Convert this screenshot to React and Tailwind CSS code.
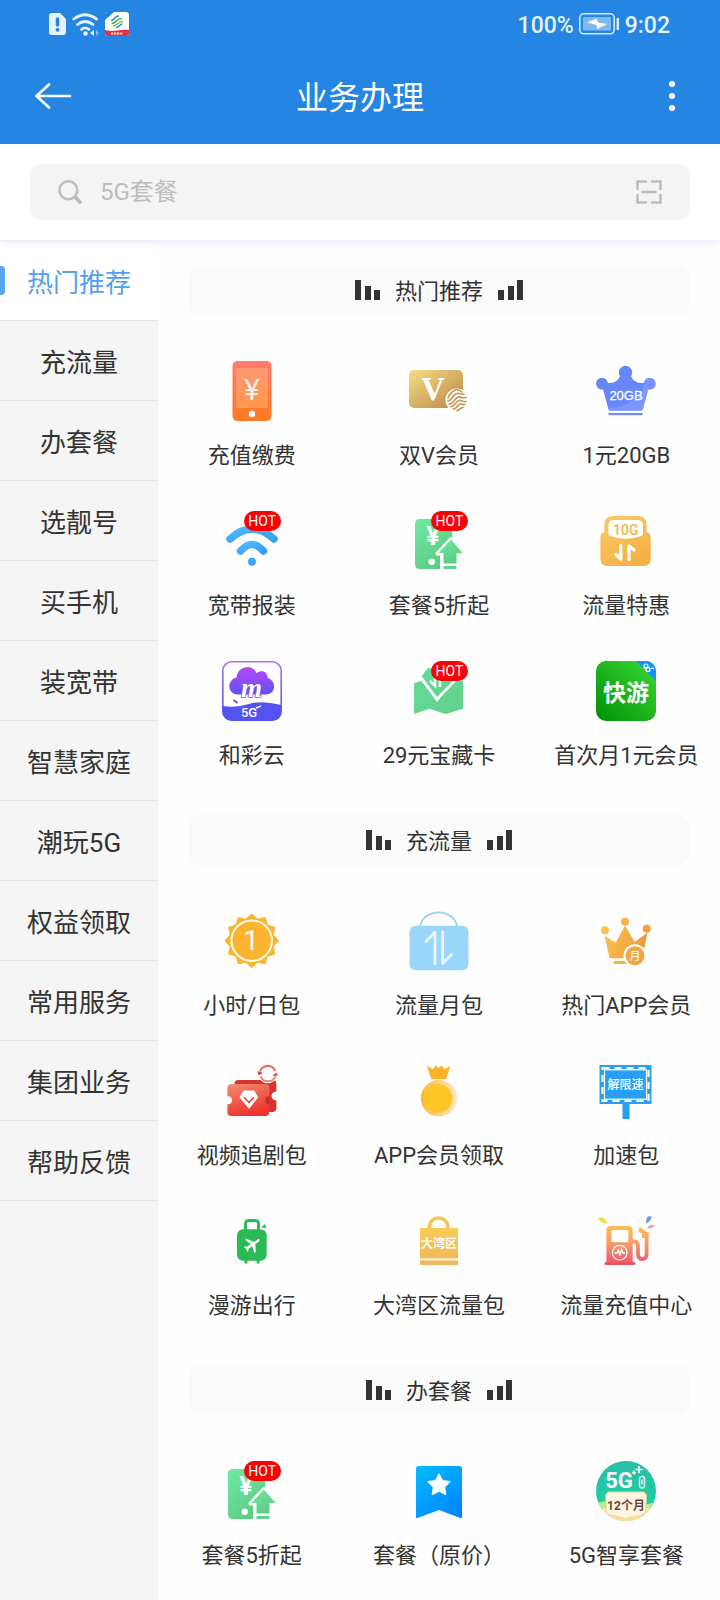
import React, { useState } from "react";

const categories = [
  "热门推荐",
  "充流量",
  "办套餐",
  "选靓号",
  "买手机",
  "装宽带",
  "智慧家庭",
  "潮玩5G",
  "权益领取",
  "常用服务",
  "集团业务",
  "帮助反馈",
];

// Linear gradient from one corner of the shape to another
const Grad = ({ id, from, to, x2 = 0, y2 = 1, x1 = 0, y1 = 0 }) => (
  <linearGradient id={id} x1={x1} y1={y1} x2={x2} y2={y2}>
    <stop offset="0" stopColor={from} />
    <stop offset="1" stopColor={to} />
  </linearGradient>
);

const Icon = ({ children }) => (
  <svg viewBox="0 0 60 60" className="block h-[60px] w-[60px]" aria-hidden="true">
    {children}
  </svg>
);

const SANS = "Roboto, 'Noto Sans CJK SC', sans-serif";

const RechargeIcon = () => (
  <Icon>
    <Grad id="recharge" from="#ff7b71" to="#ff7a20" />
    <rect x="10.5" width="39" height="60" rx="5" fill="url(#recharge)" />
    <rect x="14" y="7" width="32" height="40" rx="1" fill="#ffd080" opacity="0.35" />
    <text x="30" y="39" fontSize="30" fill="#f4efee" textAnchor="middle" fontFamily={SANS}>
      ¥
    </text>
    <circle cx="30" cy="53" r="3.2" fill="#fff" />
  </Icon>
);

const VipCardIcon = () => (
  <Icon>
    <Grad id="vip" from="#f6dc86" to="#b98746" x2={1} />
    <rect y="9" width="54" height="38" rx="5" fill="url(#vip)" />
    <text x="24" y="39" fontSize="33" fontWeight="700" fill="#fff" textAnchor="middle" fontFamily="'Liberation Serif', serif">
      V
    </text>
    <circle cx="48" cy="39" r="11.5" fill="#fff" />
    <g fill="none" stroke="#c79a58" strokeWidth="1.7" strokeLinecap="round">
      <path d="M39 37c1-4 6-8 9-8.500c3 .5 4 1.500 5 2.500" />
      <path d="M39 40c4 0 5-7 9-7.500c3-.3 4 1 7 0.500" />
      <path d="M40 43c5 0 6-6.500 9-7c3-.3 4 1.500 8 0.500" />
      <path d="M41.500 45.500c5 0 5-5.500 8.500-6c3-.3 3.500 1.500 7 1" />
      <path d="M44 48c4 .5 4-4.500 7-4.800c2-.2 3 .8 5 .3" />
      <path d="M48 49.500c3-.5 3-3 6.500-3" />
    </g>
  </Icon>
);

const Crown20Icon = () => (
  <Icon>
    <clipPath id="crown20">
      <path d="M6.700 27 12.300 48q.5 1.700 2 1.700h30.600q1.500 0 2-1.700L52.700 27 48 22Q38 23 35 15h-11Q21 23 11.400 22z" />
    </clipPath>
    <g fill="#6886fb">
      <circle cx="29.500" cy="11.500" r="6.700" />
      <circle cx="6" cy="22.700" r="6" />
      <circle cx="53.800" cy="22.700" r="6" fill="#7890fc" />
    </g>
    <g clipPath="url(#crown20)">
      <rect width="60" height="60" fill="#6886fb" />
      <path d="M12 47Q44 46 51 16L60 20V60H10z" fill="#8ea4fd" opacity="0.55" />
    </g>
    <rect x="12.500" y="52" width="34" height="2.200" fill="#7188f5" />
    <text x="30" y="38.500" fontSize="13" fill="#fff" stroke="#fff" strokeWidth="0.300" textAnchor="middle" fontFamily="'Liberation Sans', sans-serif">
      20GB
    </text>
  </Icon>
);

const WifiIcon = () => (
  <Icon>
    <Grad id="wifi" from="#50b7fd" to="#399eef" x2={1} />
    <g fill="none" stroke="url(#wifi)" strokeWidth="7.500" strokeLinecap="round">
      <path d="M8 28Q30 8 52 28" />
      <path d="M18.500 40Q30 27 41.500 40" />
    </g>
    <circle cx="30" cy="50.700" r="4" fill="#3fa6f4" />
  </Icon>
);

const HalfPriceIcon = () => (
  <Icon>
    <Grad id="half" from="#6eeaa5" to="#5ecb82" x2={0.6} />
    <path d="M11 8H43.300V30L31 44V58H11q-5 0-5-5V13q0-5 5-5z" fill="url(#half)" />
    <text x="24" y="34" fontSize="25" fontWeight="700" fill="#fff" textAnchor="middle" fontFamily={SANS}>
      ¥
    </text>
    <circle cx="22.700" cy="50.700" r="3.200" fill="#fff" />
    <path d="M42 28 28.500 42.500H34V60H48V42.500H54z" fill="#fff" stroke="#fff" strokeWidth="4" strokeLinejoin="round" />
    <path d="M42 28.500 29.500 42H34.500V52.500H47.500V42H53.500z" fill="url(#half)" />
    <rect x="34.500" y="55" width="13" height="3" fill="#62d189" />
  </Icon>
);

const Data10Icon = () => (
  <Icon>
    <Grad id="data10" from="#f8cb6a" to="#f6b045" x2={0.6} />
    <path
      d="M17 5h25q8.500 0 8.500 8.500V21q4.200 1 4.200 5v22q0 7-7 7H11.400q-7 0-7-7V26q0-4 4-5v-7.500Q8.400 5 17 5z"
      fill="url(#data10)"
    />
    <path d="M18 9h23.500q5.500 0 5.500 5.500V24Q30 31.500 12.400 24v-9.500Q12.400 9 18 9z" fill="#fff" />
    <text x="29.700" y="24.200" fontSize="14" fontWeight="500" fill="#f5b54b" textAnchor="middle" fontFamily={SANS}>
      10G
    </text>
    <g fill="none" stroke="#fff" strokeWidth="3.300" strokeLinecap="round" strokeLinejoin="round">
      <path d="M24.800 34.500V48L20 43.500" />
      <path d="M33 48.500V35L38 39" />
    </g>
  </Icon>
);

const CloudIcon = () => (
  <Icon>
    <Grad id="cloudEdge" from="#a573ea" to="#4d51ee" />
    <Grad id="cloud" from="#b54af4" to="#6250f7" />
    <rect x="0.800" y="0.800" width="58.400" height="58.400" rx="9" fill="#fff" stroke="url(#cloudEdge)" strokeWidth="1.600" />
    <path
      d="M16 33.500C5 33.500 4.500 19 14.500 16.500C16 4 31 3 34.500 12C41 8 46 12 45.500 17C54.500 19 54.500 33.500 44 33.500z"
      fill="url(#cloud)"
    />
    <text
      x="29.500"
      y="35.500"
      fontSize="27"
      fontWeight="700"
      fontStyle="italic"
      fill="#fff"
      stroke="#7a4ff6"
      strokeWidth="1.500"
      paintOrder="stroke"
      textAnchor="middle"
      fontFamily="'Liberation Serif', serif"
    >
      m
    </text>
    <path d="M1 45Q14 47 27 43T59 44V50q0 9.500-9 9.500H10q-9 0-9-9.500z" fill="#5452f1" />
    <path d="M11.500 39l4 3" stroke="#6550f5" strokeWidth="2" />
    <text x="27" y="55.500" fontSize="13" fontWeight="500" fill="#fff" textAnchor="middle" fontFamily={SANS}>
      5G
    </text>
    <path d="M34 47l5-2" stroke="#fff" strokeWidth="1.500" />
  </Icon>
);

const TreasureIcon = () => (
  <Icon>
    <Grad id="treasure" from="#62dc96" to="#64cf8d" x2={1} />
    <path d="M5 22 12.500 20 28 41 45 19.700H54V47.700L36.700 53 20.300 47.700 5 53z" fill="url(#treasure)" />
    <path d="M12.500 15.500 18.700 7.300H42L46 18 28 38z" fill="url(#treasure)" />
    <path d="M12 16.500 28 38 46 19.500" fill="none" stroke="#fff" strokeWidth="2.600" strokeLinejoin="round" />
    <path d="M21 20l5 4.500V13M31 13v13" fill="none" stroke="#fff" strokeWidth="2.600" />
  </Icon>
);

const GameIcon = () => (
  <Icon>
    <Grad id="game" from="#39da37" to="#028f04" x1={1} x2={0} />
    <clipPath id="gameClip">
      <rect width="60" height="60" rx="10" />
    </clipPath>
    <g clipPath="url(#gameClip)">
      <rect width="60" height="60" fill="url(#game)" />
      <path d="M40 0H60V20z" fill="#1791f5" />
    </g>
    <g fill="none" stroke="#fff" strokeWidth="1.200">
      <circle cx="50" cy="5" r="2" />
      <circle cx="52" cy="8.500" r="2" />
      <path d="M47.500 7h5M55 7.500q1.500-1 3 .5" />
    </g>
    <text x="30" y="40" fontSize="23" fontWeight="700" fill="#fff" textAnchor="middle" fontFamily="'Noto Sans CJK SC', sans-serif">
      快游
    </text>
    <path d="M8 33 28 29" stroke="#1cb51c" strokeWidth="0.800" />
  </Icon>
);

// 12-pointed sun outline
const sunPoints = Array.from({ length: 24 }, (_, i) => {
  const r = i % 2 === 0 ? 27.3 : 22.8;
  const a = (i * Math.PI) / 12;
  return `${(29.7 + r * Math.sin(a)).toFixed(2)},${(29.7 - r * Math.cos(a)).toFixed(2)}`;
}).join(" ");

const HourIcon = () => (
  <Icon>
    <polygon points={sunPoints} fill="#fbb42f" />
    <circle cx="29.700" cy="29.700" r="20.200" fill="none" stroke="#fffbe8" strokeWidth="2" />
    <text x="29" y="39" fontSize="27" fill="#fff" textAnchor="middle" fontFamily={SANS}>
      1
    </text>
  </Icon>
);

const MonthBagIcon = () => (
  <Icon>
    <path d="M11 16C14-3.500 45-3.500 48.300 16" fill="none" stroke="#a4d3ee" strokeWidth="2" />
    <rect x="0.500" y="14.700" width="59" height="44.500" rx="6" fill="#9ad5fa" />
    <g fill="none" stroke="#e9f6fe" strokeWidth="2.800" strokeLinecap="round" strokeLinejoin="round">
      <path d="M17 30.500 26 21V52.500" />
      <path d="M33.700 21V52.500L42.500 43.500" />
    </g>
  </Icon>
);

const AppCrownIcon = () => (
  <Icon>
    <Grad id="appCrown" from="#fcc455" to="#ee9c3c" x2={1} y2={0.3} />
    <circle cx="9" cy="19.300" r="4" fill="#fac150" />
    <circle cx="29" cy="10.700" r="4" fill="#f6b34a" />
    <circle cx="50.700" cy="17.700" r="4" fill="#efa143" />
    <path d="M8.500 24.500 19.700 31.700 29 14.500 38.700 31 51.500 21.500 46.500 47.300H15q-1.500 0-1.800-1.500z" fill="url(#appCrown)" />
    <path d="M19 50H40V53H19q-1.500 0-1.500-1.500T19 50z" fill="#f6b34a" />
    <circle cx="39" cy="44.700" r="11.500" fill="#fff" />
    <circle cx="39" cy="44.700" r="9.500" fill="#f2a545" />
    <text x="39" y="49" fontSize="11" fontWeight="500" fill="#fff" textAnchor="middle" fontFamily={SANS}>
      月
    </text>
  </Icon>
);

const TicketIcon = () => (
  <Icon>
    <Grad id="ticket" from="#ef8f70" to="#ef342f" x2={0.4} />
    <rect x="12.400" y="19" width="42" height="32" rx="4" fill="#d4362f" />
    <circle cx="53.700" cy="35" r="4.200" fill="#fff" />
    <rect x="5.400" y="23" width="42" height="32" rx="4" fill="url(#ticket)" />
    <circle cx="6" cy="39.300" r="4" fill="#fff" />
    <path d="M47.400 35.300a4 4 0 0 0 0 8z" fill="#c42c29" />
    <path d="M21.700 30H32L35.700 36.300 27 47.300 18 36.300z" fill="#fff" stroke="#fff" strokeLinejoin="round" />
    <path d="M22 36.500 27 41.300 32 36.500" fill="none" stroke="#dd4a3f" strokeWidth="1.600" />
    <circle cx="45.700" cy="12.700" r="9.500" fill="#fff" />
    <g fill="none" stroke="#e6695a" strokeWidth="2">
      <path d="M38 10.500C40.500 3.500 50.500 3 53.300 10" />
      <path d="M53.500 15C51 22 41.500 22 38.500 15.500" stroke="#e68b78" />
    </g>
    <path d="M35.500 10 41 12l-4.500 2.500zM56 14.500l-6 .5 4.500-3.500z" fill="#d9463c" />
  </Icon>
);

const MedalIcon = () => (
  <Icon>
    <Grad id="medal" from="#f9b934" to="#fde8c4" x2={1} y2={0} />
    <path d="M18 5 24 8 27 4.500 29.700 7 32.500 4.500 35.500 8 41.500 5 37 18.300H22.300z" fill="#fcb426" />
    <circle cx="30" cy="37.300" r="18.200" fill="url(#medal)" />
    <circle cx="29.500" cy="37.300" r="14" fill="#fec625" />
  </Icon>
);

const SpeedIcon = () => (
  <Icon>
    <rect x="3.500" y="4" width="52" height="39" fill="#289ff4" />
    <rect x="26.500" y="43" width="7" height="15" fill="#289ff4" />
    <rect x="6.500" y="7" width="46" height="33" fill="none" stroke="#fff" strokeWidth="2.200" strokeDasharray="7 5" />
    <rect x="8.500" y="8.800" width="42" height="29.400" fill="#289ff4" stroke="#fff" strokeWidth="1.200" />
    <text x="29.500" y="28" fontSize="12" fontWeight="500" fill="#fff" textAnchor="middle" fontFamily={SANS}>
      解限速
    </text>
  </Icon>
);

const TravelIcon = () => (
  <Icon>
    <rect x="23.500" y="9.500" width="13" height="14" rx="3" fill="none" stroke="#2abb55" strokeWidth="3" />
    <rect x="15" y="18.300" width="29.700" height="31.500" rx="6" fill="#2abb55" />
    <path d="M22 49h4l-1 3.500h-2zM34 49h4l-1 3.500h-2z" fill="#2abb55" />
    <path d="M39 16.500 43 13l1.500 4z" fill="#2abb55" />
    <path
      d="M21 16v-2l-8-5V3.500c0-.83-.67-1.500-1.500-1.500S10 2.670 10 3.500V9l-8 5v2l8-2.500V19l-2 1.500V22l3.500-1 3.500 1v-1.500L13 19v-5.500l8 2.500z"
      transform="translate(30.500 33.500) rotate(55) scale(0.850) translate(-11.500 -12)"
      fill="#fff"
    />
  </Icon>
);

const BayAreaIcon = () => (
  <Icon>
    <path d="M20.500 19V16C20.500 4 38.700 4 38.700 16V19" fill="none" stroke="#f7c45c" strokeWidth="3.600" />
    <Grad id="bay" from="#f8cb55" to="#f0b65c" />
    <rect x="11" y="17" width="38" height="37" rx="1" fill="url(#bay)" />
    <rect x="11" y="47.300" width="38" height="2.200" fill="#fff4d8" />
    <text x="30" y="37" fontSize="12" fontWeight="700" fill="#fff" textAnchor="middle" fontFamily={SANS}>
      大湾区
    </text>
  </Icon>
);

const PumpIcon = () => (
  <Icon>
    <linearGradient id="pump" gradientUnits="userSpaceOnUse" x1="0" y1="14" x2="0" y2="54">
      <stop offset="0" stopColor="#fbc254" />
      <stop offset="0.500" stopColor="#f79668" />
      <stop offset="1" stopColor="#ee5070" />
    </linearGradient>
    <path d="M14.500 15H32.500q4.200 0 4.200 4.200V52H10.400V19.200Q10.400 15 14.500 15z" fill="url(#pump)" />
    <rect x="15.400" y="19" width="17" height="12.300" rx="1.500" fill="#fff" />
    <rect x="8.400" y="51" width="31" height="3" rx="1.500" fill="#e9545f" />
    <circle cx="23.700" cy="41.700" r="7.300" fill="none" stroke="#fff" strokeWidth="1.200" />
    <path d="M18.500 42h2.500l1.500-3 1.500 6 1.500-7 1.500 4h2" fill="none" stroke="#fff" strokeWidth="1.300" />
    <path d="M36 30.500h2q4 0 4 4V43q0 5 4.300 5t4.300-5V21" fill="none" stroke="url(#pump)" strokeWidth="3.800" />
    <path d="M44 16 52.500 22V27H46V22.500L42 20z" fill="url(#pump)" />
    <path d="M2 7Q8 4 11.500 12.500Q4 12.500 2 7z" fill="#f7da45" />
    <path d="M50 11Q50 4 55.500 5.500Q56 9 50.500 12.500z" fill="#6d9ae3" />
    <path d="M51 17.500Q54 12 58.500 14.500Q57 18 51 17.500z" fill="#f09aa5" />
  </Icon>
);

const BookmarkIcon = () => (
  <Icon>
    <Grad id="bookmark" from="#00bcff" to="#0088ff" x2={0.7} />
    <path d="M10 5H50q3 0 3 3V56q0 1.500-1.500 1L30 49 8.500 57q-1.500 .5-1.500-1V8q0-3 3-3z" fill="url(#bookmark)" />
    <path
      d="M30 13l3.300 6.700 7.400 1.100-5.300 5.200 1.200 7.300L30 29.900l-6.600 3.400 1.200-7.300-5.300-5.200 7.400-1.100z"
      fill="#fff"
      stroke="#fff"
      strokeWidth="1.500"
      strokeLinejoin="round"
    />
  </Icon>
);

const Enjoy5GIcon = () => (
  <Icon>
    <Grad id="enjoy" from="#2abda6" to="#17d7a0" />
    <clipPath id="enjoyClip">
      <circle cx="30" cy="30" r="30" />
    </clipPath>
    <g clipPath="url(#enjoyClip)">
      <rect width="60" height="60" fill="url(#enjoy)" />
      <path d="M0 42Q15 38 30 42T60 41V60H0z" fill="#b4eb86" />
      <path d="M0 48Q30 43 60 48V60H0z" fill="#f8e9b0" />
      <path d="M12 31H48q1.500 1.500 2.500 3l-1 19L30 58 10.500 53l-1-19q1-1.500 2.500-3z" fill="#fef6e3" stroke="#e6cf95" />
      <path d="M4 54Q20 53 30 57.500Q40 53 56 54V60H4z" fill="#f6dc98" />
    </g>
    <text x="23" y="27" fontSize="22" fontWeight="700" fill="#fff" textAnchor="middle" fontFamily={SANS}>
      5G
    </text>
    <path d="M36 11.500h4M38 9.500v4M39.500 8.500h7M43 5v7" stroke="#fff" strokeWidth="1.700" />
    <rect x="43.500" y="15.500" width="5" height="11.500" rx="2.500" fill="none" stroke="#d8f9ef" strokeWidth="1.500" />
    <path d="M46 18.500v5" stroke="#d8f9ef" strokeWidth="1.500" />
    <text x="30" y="48.500" fontSize="12" fontWeight="700" fill="#6f4336" textAnchor="middle" fontFamily={SANS}>
      12个月
    </text>
  </Icon>
);

const sections = [
  {
    title: "热门推荐",
    items: [
      { label: "充值缴费", icon: RechargeIcon },
      { label: "双V会员", icon: VipCardIcon },
      { label: "1元20GB", icon: Crown20Icon },
      { label: "宽带报装", icon: WifiIcon, hot: true },
      { label: "套餐5折起", icon: HalfPriceIcon, hot: true },
      { label: "流量特惠", icon: Data10Icon },
      { label: "和彩云", icon: CloudIcon },
      { label: "29元宝藏卡", icon: TreasureIcon, hot: true },
      { label: "首次月1元会员", icon: GameIcon },
    ],
  },
  {
    title: "充流量",
    items: [
      { label: "小时/日包", icon: HourIcon },
      { label: "流量月包", icon: MonthBagIcon },
      { label: "热门APP会员", icon: AppCrownIcon },
      { label: "视频追剧包", icon: TicketIcon },
      { label: "APP会员领取", icon: MedalIcon },
      { label: "加速包", icon: SpeedIcon },
      { label: "漫游出行", icon: TravelIcon },
      { label: "大湾区流量包", icon: BayAreaIcon },
      { label: "流量充值中心", icon: PumpIcon },
    ],
  },
  {
    title: "办套餐",
    items: [
      { label: "套餐5折起", icon: HalfPriceIcon, hot: true },
      { label: "套餐（原价）", icon: BookmarkIcon },
      { label: "5G智享套餐", icon: Enjoy5GIcon },
    ],
  },
];

const StatusBar = () => (
  <div className="flex h-12 items-center justify-between pl-[49px] pr-[50px] text-[23px] font-medium text-[#e2f3ff]">
    <div className="flex items-center gap-[6px]">
      <svg viewBox="0 0 17 22" className="h-[22px] w-[17px]" aria-hidden="true">
        <path d="M3 0h8l6 6v13q0 3-3 3H3q-3 0-3-3V3q0-3 3-3z" fill="#e6f3fe" />
        <path d="M8.500 6v6" stroke="#2486e2" strokeWidth="3.500" strokeLinecap="round" />
        <circle cx="8.500" cy="16.800" r="1.900" fill="#2486e2" />
      </svg>
      <svg viewBox="0 0 27 23" className="h-[23px] w-[27px]" aria-hidden="true">
        <g fill="none" stroke="#e6f3fe" strokeWidth="2.800" strokeLinecap="round">
          <path d="M1.800 6Q13 -2.500 24.500 6" />
          <path d="M5.500 11.500Q13 5.500 21 11.500" />
          <path d="M9.500 16.300Q13 13.500 17 16.300" />
        </g>
        <circle cx="13.500" cy="20.500" r="2.300" fill="#e6f3fe" />
        <path d="M22 17v6l-4-3z" fill="#e6f3fe" />
        <path d="M24 17v6l3-3z" fill="#7db7ef" />
      </svg>
      <svg viewBox="0 0 24 24" className="h-6 w-6" aria-hidden="true">
        <rect width="24" height="24" rx="3" fill="#fff" />
        <path d="M0 8V3q0-3 3-3h6z" fill="#1c86d8" />
        <g fill="none" stroke="#2a8fd0" strokeWidth="1.600">
          <path d="M6 8.500C10 8 10 3.500 14 4" />
          <path d="M6.500 11.500C12 11 11 6 17 6.500" stroke="#47b36a" />
          <path d="M8 14C13.500 13.500 12.500 9 18 9.500" stroke="#8cc63f" />
          <path d="M11 15.500C15 15 14.500 12 17.500 12" />
        </g>
        <path d="M0 18Q6 19.500 12 18.500T24 18V21q0 3-3 3H3q-3 0-3-3z" fill="#e5333a" />
        <path d="M6 21.500h12" stroke="#fbd0d0" strokeWidth="2.200" strokeDasharray="2.400 0.600" />
      </svg>
    </div>
    <div className="flex items-center gap-[5px]">
      <span className="pt-1">100%</span>
      <svg viewBox="0 0 41 22" className="h-[22px] w-[41px]" aria-hidden="true">
        <rect x="0.800" y="0.800" width="34.400" height="20" rx="4" fill="none" stroke="#d3e9fc" strokeWidth="1.600" />
        <rect x="4" y="4" width="28" height="13.600" rx="1" fill="#7fb9ef" />
        <path d="M8 9.500 17.500 5.500 19 9.500 28 11 18.500 16 17.500 12z" fill="#fff" />
        <rect x="37.500" y="5" width="2.600" height="12" rx="1" fill="#d3e9fc" />
      </svg>
      <span className="pt-1">9:02</span>
    </div>
  </div>
);

const Header = () => (
  <header className="relative z-20 bg-[#2486e2] text-white">
    <StatusBar />
    <div className="flex h-24 items-center justify-between px-[34px]">
      <button type="button" aria-label="返回" className="w-10">
        <svg viewBox="0 0 40 26" className="block h-[26px] w-10" aria-hidden="true">
          <path
            d="M15 1.500 2.500 13 15 24.500M2.500 13H36"
            fill="none"
            stroke="#fff"
            strokeWidth="2.600"
            strokeLinecap="round"
            strokeLinejoin="round"
          />
        </svg>
      </button>
      <h1 className="pt-1 text-[32px] leading-10">业务办理</h1>
      <button type="button" aria-label="更多" className="flex w-10 flex-col items-center gap-[6px] pl-3">
        <span className="h-[6px] w-[6px] rounded-full bg-white" />
        <span className="h-[6px] w-[6px] rounded-full bg-white" />
        <span className="h-[6px] w-[6px] rounded-full bg-white" />
      </button>
    </div>
  </header>
);

const SearchBar = () => (
  <div className="relative z-10 bg-white px-[30px] py-5 shadow-[0_2px_8px_#e4e9f6]">
    <div className="flex h-14 items-center rounded-[10px] bg-[#f4f4f4] pl-7 pr-7">
      <svg viewBox="0 0 24 24" className="h-6 w-6 shrink-0" aria-hidden="true">
        <circle cx="10.300" cy="10.300" r="9" fill="none" stroke="#bdbdbd" strokeWidth="2.500" />
        <path d="M17 17l5 5" stroke="#bdbdbd" strokeWidth="3.800" strokeLinecap="round" />
      </svg>
      <input
        type="text"
        aria-label="搜索"
        placeholder="5G套餐"
        className="ml-[18px] min-w-0 flex-1 bg-transparent text-[24px] leading-8 text-[#333] outline-none placeholder:text-[#bdbdbd]"
      />
      <button type="button" aria-label="扫一扫" className="shrink-0">
        <svg viewBox="0 0 26 24" className="block h-6 w-[26px]" aria-hidden="true">
          <path
            d="M1.500 9V1.500H10M16 1.500H24.500V9M24.500 15V22.500H16M10 22.500H1.500V15M6.500 12h13"
            fill="none"
            stroke="#bdbdbd"
            strokeWidth="2.600"
            strokeLinecap="round"
          />
        </svg>
      </button>
    </div>
  </div>
);

const Sidebar = ({ active, onSelect }) => (
  <nav className="w-[158px] shrink-0 bg-[#f5f5f5] pt-px">
    {categories.map((name) => (
      <button
        key={name}
        type="button"
        onClick={() => onSelect(name)}
        className={`relative block h-20 w-full border-b border-[#e6e6e6] pt-1 text-center text-[26px] leading-8 ${
          name === active ? "bg-white text-[#549fec]" : "text-[#333]"
        }`}
      >
        {name === active && (
          <span className="absolute left-0 top-[25px] h-[29px] w-[5px] rounded-r-[4px] bg-[#5aa5f0]" />
        )}
        {name}
      </button>
    ))}
  </nav>
);

const Bars = ({ rising }) => (
  <span className={`flex items-end gap-[3px] ${rising ? "flex-row-reverse" : ""}`}>
    <span className="h-5 w-[6px] bg-[#333]" />
    <span className="ml-px h-[14px] w-[6px] bg-[#333]" />
    <span className="h-[10px] w-[6px] bg-[#333]" />
  </span>
);

const ServiceItem = ({ item }) => {
  const ItemIcon = item.icon;
  return (
    <a href="#" className="flex h-[150px] flex-col items-center pt-[21px] text-[#333]">
      <span className="relative">
        <ItemIcon />
        {item.hot && (
          <span className="absolute right-px top-0 flex h-5 w-[37px] items-center justify-center rounded-full bg-[#fb0006] text-[14px] leading-5 text-white">
            HOT
          </span>
        )}
      </span>
      <span className="mt-[19px] whitespace-nowrap text-[22px] leading-8">{item.label}</span>
    </a>
  );
};

const Section = ({ section }) => (
  <section className="pt-[25px]">
    <h2 className="mx-[31px] flex h-[50px] items-center justify-center gap-[15px] rounded-[10px] bg-[#fafafa] text-[22px] leading-8 text-[#333]">
      <Bars />
      <span className="pt-1">{section.title}</span>
      <Bars rising />
    </h2>
    <div className="grid grid-cols-3 pt-[25px]">
      {section.items.map((item) => (
        <ServiceItem key={item.label} item={item} />
      ))}
    </div>
  </section>
);

export default function App() {
  const [active, setActive] = useState("热门推荐");

  return (
    <div className="flex min-h-screen flex-col bg-[#fefefe] font-[Roboto,'Noto_Sans_CJK_SC',sans-serif]">
      <Header />
      <SearchBar />
      <div className="flex flex-1">
        <Sidebar active={active} onSelect={setActive} />
        <main className="min-w-0 flex-1">
          {sections.map((section) => (
            <Section key={section.title} section={section} />
          ))}
        </main>
      </div>
    </div>
  );
}
